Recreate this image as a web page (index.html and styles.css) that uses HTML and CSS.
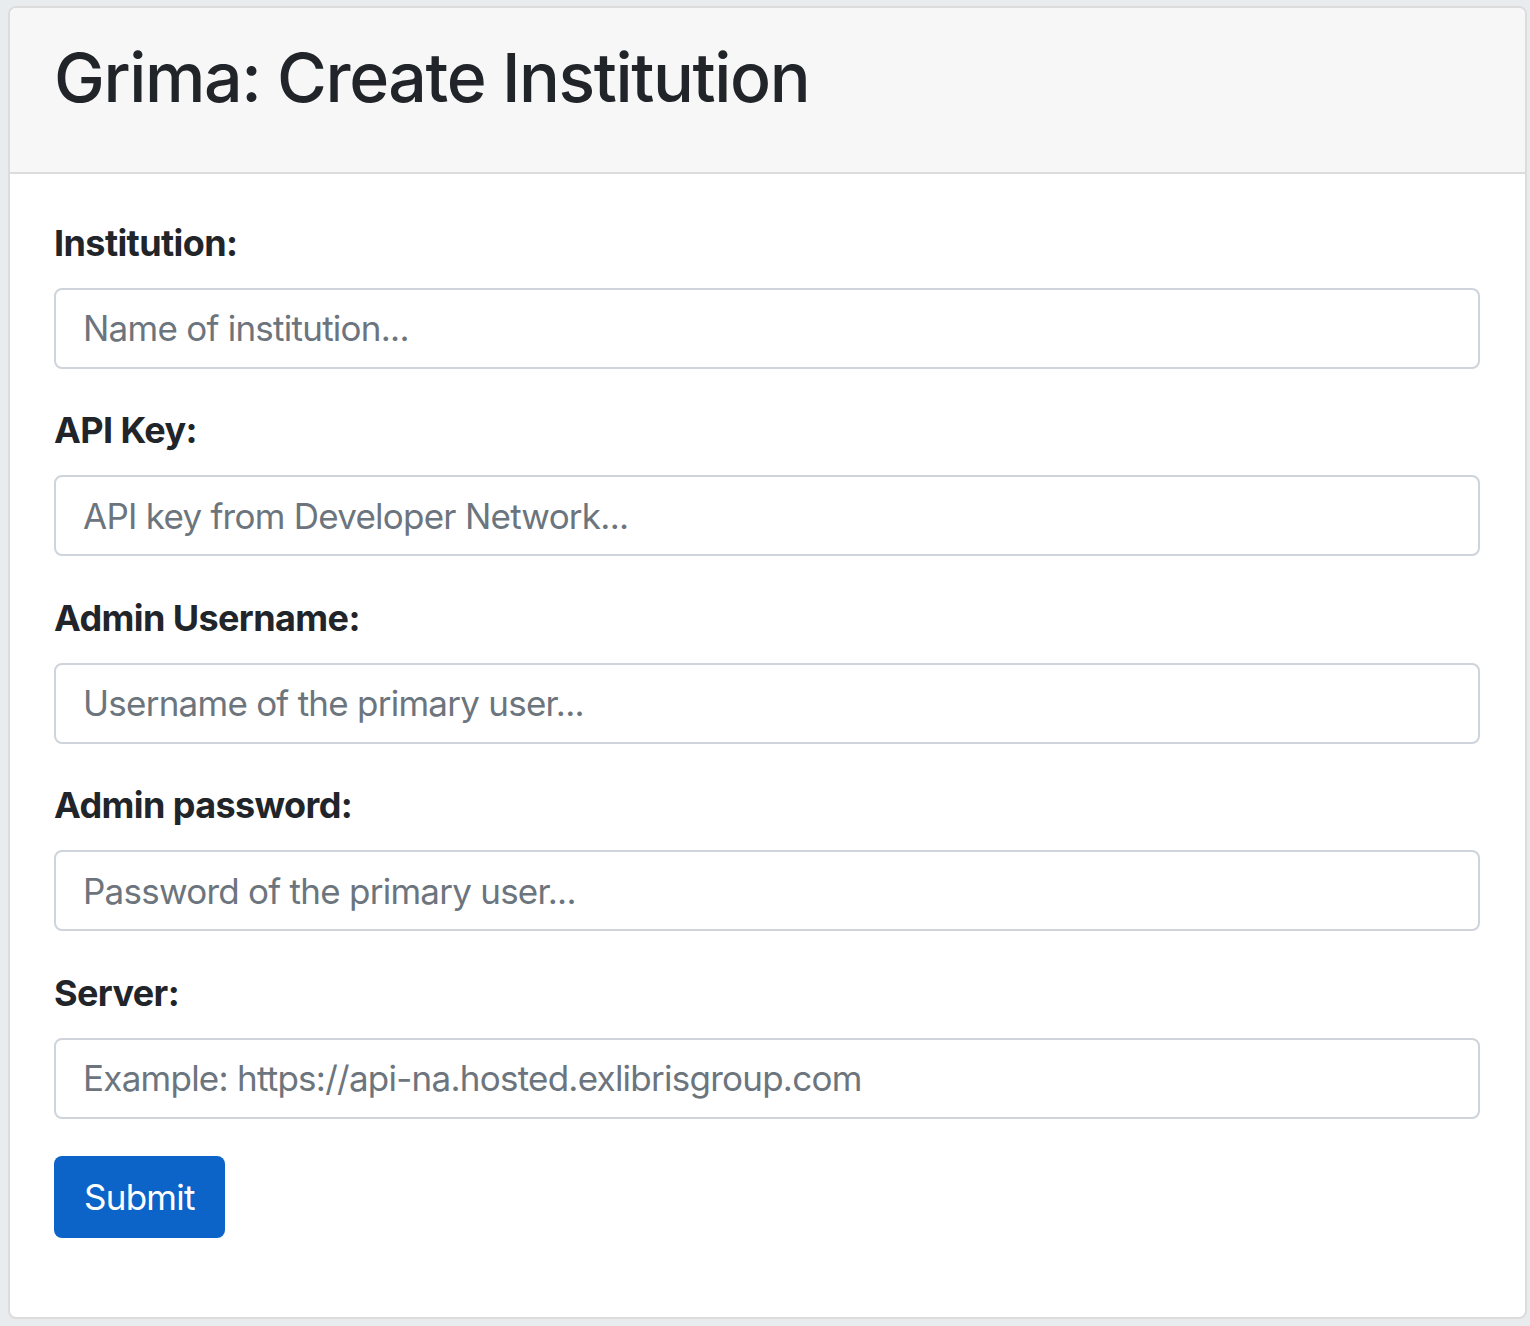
FILE: index.html
```html
<!DOCTYPE html>
<html lang="en">
<head>
<meta charset="utf-8">
<title>Grima: Create Institution</title>
<link rel="stylesheet" href="styles.css">
</head>
<body>
<div class="page">
  <div class="card">
    <div class="card-header">
      <h1 class="title">Grima: Create Institution</h1>
    </div>
    <form class="card-body">
      <div class="form-group">
        <label class="label" for="inst">Institution:</label>
        <input class="input" id="inst" type="text" placeholder="Name of institution...">
      </div>
      <div class="form-group">
        <label class="label" for="apikey">API Key:</label>
        <input class="input" id="apikey" type="text" placeholder="API key from Developer Network...">
      </div>
      <div class="form-group">
        <label class="label" for="user">Admin Username:</label>
        <input class="input" id="user" type="text" placeholder="Username of the primary user...">
      </div>
      <div class="form-group">
        <label class="label" for="pass">Admin password:</label>
        <input class="input" id="pass" type="password" placeholder="Password of the primary user...">
      </div>
      <div class="form-group">
        <label class="label" for="server">Server:</label>
        <input class="input" id="server" type="text" placeholder="Example: https://api-na.hosted.exlibrisgroup.com">
      </div>
      <button class="btn" type="submit">Submit</button>
    </form>
  </div>
</div>
</body>
</html>
```

FILE: styles.css
```css
* { box-sizing: border-box; }

html, body {
  margin: 0;
  padding: 0;
}

body {
  background: #e9ecef;
  font-family: Inter, "Noto Sans", "Liberation Sans", sans-serif;
  color: #212529;
}

.page {
  padding: 6px 3px 6px 8px;
}

.card {
  background: #ffffff;
  border: 2px solid #dcdcdc;
  border-radius: 8px;
  overflow: hidden;
}

.card-header {
  background: #f7f7f7;
  border-bottom: 2px solid #dcdcdc;
  padding: 29px 44px 53px 44px;
}

.title {
  margin: 0;
  font-size: 68px;
  font-weight: 500;
  line-height: 1.2;
  letter-spacing: -1.4px;
  color: #212529;
}

.card-body {
  display: flex;
  flex-direction: column;
  align-items: flex-start;
  padding: 42px 45px 79px 44px;
}

.form-group {
  display: flex;
  flex-direction: column;
  width: 100%;
  margin-bottom: 34.5px;
}

.label {
  font-size: 36px;
  font-weight: 700;
  line-height: 55px;
  letter-spacing: -0.6px;
  margin-bottom: 17px;
  color: #212529;
}

.input {
  height: 81px;
  width: 100%;
  border: 2px solid #ced4da;
  border-radius: 8px;
  padding: 0 27px;
  font-family: inherit;
  font-size: 35px;
  letter-spacing: -0.75px;
  color: #495057;
  background: #ffffff;
  outline: none;
}

.input::placeholder {
  color: #6c757d;
  opacity: 1;
}

.btn {
  margin-top: 2.5px;
  height: 82px;
  padding: 0 30px;
  border: 0;
  border-radius: 8px;
  background: #0d64c8;
  color: #ffffff;
  font-family: inherit;
  font-size: 35px;
  font-weight: 400;
  letter-spacing: -0.75px;
  cursor: pointer;
}
```
